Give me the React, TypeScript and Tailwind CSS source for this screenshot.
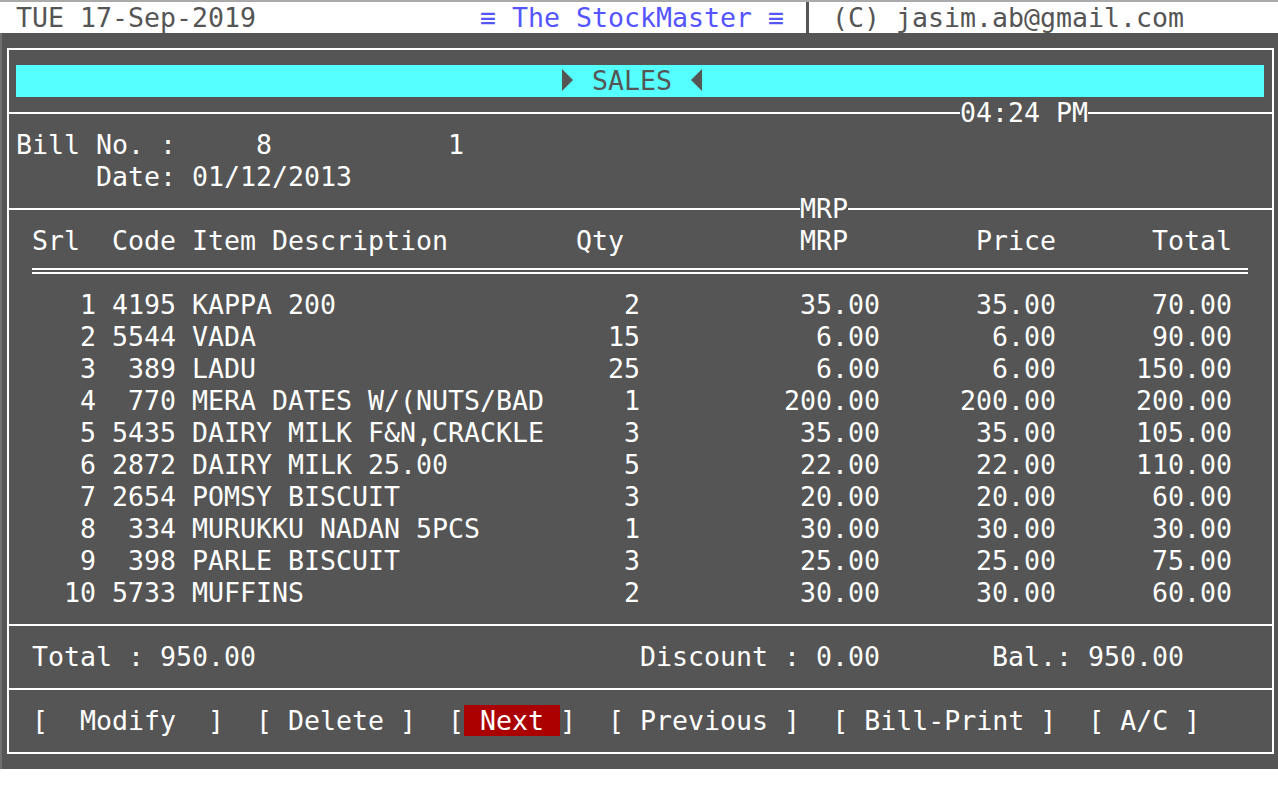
const items: [number, number, string, number, string, string, string][] = [
  [1, 4195, "KAPPA 200", 2, "35.00", "35.00", "70.00"],
  [2, 5544, "VADA", 15, "6.00", "6.00", "90.00"],
  [3, 389, "LADU", 25, "6.00", "6.00", "150.00"],
  [4, 770, "MERA DATES W/(NUTS/BAD", 1, "200.00", "200.00", "200.00"],
  [5, 5435, "DAIRY MILK F&N,CRACKLE", 3, "35.00", "35.00", "105.00"],
  [6, 2872, "DAIRY MILK 25.00", 5, "22.00", "22.00", "110.00"],
  [7, 2654, "POMSY BISCUIT", 3, "20.00", "20.00", "60.00"],
  [8, 334, "MURUKKU NADAN 5PCS", 1, "30.00", "30.00", "30.00"],
  [9, 398, "PARLE BISCUIT", 3, "25.00", "25.00", "75.00"],
  [10, 5733, "MUFFINS", 2, "30.00", "30.00", "60.00"],
];

const cols = "grid grid-cols-[80px_80px_368px_96px_240px_176px_176px]";

function Line() {
  return <div className="h-[2px] flex-1 bg-white" />;
}

// DOS style pointer triangles (char 0x10 / 0x11), one text cell each
function Pointer({ left }: { left?: boolean }) {
  return (
    <svg width="16" height="32" viewBox="0 0 16 32" className="shrink-0">
      <polygon
        points={left ? "14,4 14,26 3,15" : "2,4 2,26 13,15"}
        fill="#555555"
      />
    </svg>
  );
}

export default function App() {
  return (
    <div className="h-[800px] w-[1278px] overflow-hidden bg-white font-['DejaVu_Sans_Mono',monospace] text-[26.58px] leading-8 whitespace-pre">
      {/* top status bar */}
      <div className="flex h-[33px] items-center border-t-2 border-[#aaaaaa] text-[#555555]">
        <span className="w-[480px] pl-4">TUE 17-Sep-2019</span>
        <span className="w-[320px] text-[#5555ff]">≡ The StockMaster ≡</span>
        <span className="flex h-full w-4 pl-[6px]">
          <span className="w-[3px] bg-[#555555]" />
        </span>
        <span className="pl-4">(C) jasim.ab@gmail.com</span>
      </div>

      {/* screen */}
      <div className="h-[736px] border-l-2 border-[#6f6f6f] bg-[#555555] pt-[15px] pl-[5px] text-white">
        <div className="flex h-[706px] w-[1267px] flex-col border-2 border-white">
          <div className="h-[15px]" />

          <div className="ml-[7px] mr-[8px] flex h-8 bg-[#55ffff] pl-[544px] text-[#555555]">
            <Pointer />
            <span> SALES </span>
            <Pointer left />
          </div>

          <div className="flex h-8 items-center">
            <div className="h-[2px] w-[951px] bg-white" />
            <span>04:24 PM</span>
            <Line />
          </div>

          <div className="h-8 pl-[7px]">Bill No. :     8           1</div>
          <div className="h-8 pl-[7px]">     Date: 01/12/2013</div>

          <div className="flex h-8 items-center">
            <div className="h-[2px] w-[791px] bg-white" />
            <span>MRP</span>
            <Line />
          </div>

          {/* headers */}
          <div className={`${cols} ml-[7px] h-8`}>
            <span className="pl-4">Srl</span>
            <span className="text-right">Code</span>
            <span className="pl-4">Item Description</span>
            <span className="pr-4 text-right">Qty</span>
            <span className="pr-8 text-right">MRP</span>
            <span className="text-right">Price</span>
            <span className="text-right">Total</span>
          </div>

          <div className="ml-[23px] flex h-8 w-[1216px] flex-col gap-[2px] pt-[11px]">
            <div className="h-[2px] bg-white" />
            <div className="h-[2px] bg-white" />
          </div>

          {/* items */}
          {items.map(([srl, code, desc, qty, mrp, price, total]) => (
            <div key={srl} className={`${cols} ml-[7px] h-8`}>
              <span className="text-right">{srl}</span>
              <span className="text-right">{code}</span>
              <span className="pl-4">{desc}</span>
              <span className="text-right">{qty}</span>
              <span className="text-right">{mrp}</span>
              <span className="text-right">{price}</span>
              <span className="text-right">{total}</span>
            </div>
          ))}

          <div className="flex h-8 items-center">
            <Line />
          </div>

          <div className="flex h-8 pl-[23px]">
            <span className="w-[608px]">Total : 950.00</span>
            <span className="w-[352px]">Discount : 0.00</span>
            <span>Bal.: 950.00</span>
          </div>

          <div className="flex h-8 items-center">
            <Line />
          </div>

          {/* commands */}
          <div className="flex h-8 gap-8 pl-[23px]">
            <span>[  Modify  ]</span>
            <span>[ Delete ]</span>
            <span>
              [<span className="bg-[#aa0000]"> Next </span>]
            </span>
            <span>[ Previous ]</span>
            <span>[ Bill-Print ]</span>
            <span>[ A/C ]</span>
          </div>

          <div className="h-[15px]" />
        </div>
      </div>
    </div>
  );
}
